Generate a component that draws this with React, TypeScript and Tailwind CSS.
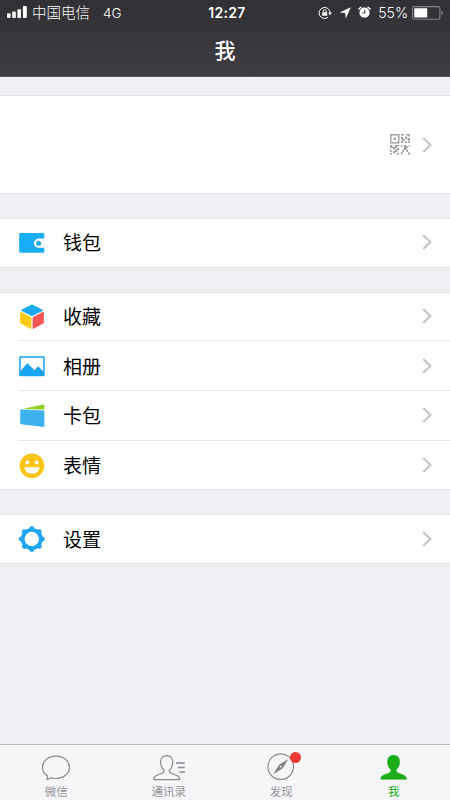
import React from 'react';

interface RowItem {
  name: string;
  icon: React.ReactNode;
}

interface TabItem {
  name: string;
  icon: React.ReactNode;
  active?: boolean;
  badge?: boolean;
}

const WalletIcon = () => (
  <svg width="28" height="28" viewBox="0 0 28 28">
    <path
      d="M2.5 4H25a1.3 1.3 0 0 1 1.3 1.3V9.6H20.6a4.6 4.6 0 0 0 0 9.2H26.3v3.7A1.3 1.3 0 0 1 25 23.8H2.5a1.3 1.3 0 0 1-1.3-1.3V5.3A1.3 1.3 0 0 1 2.5 4Z"
      fill="#18adf8"
    />
    <circle cx="20.6" cy="14.2" r="2.5" fill="#18adf8" />
  </svg>
);

const CubeIcon = () => (
  <svg width="28" height="28" viewBox="0 0 28 28" strokeLinejoin="round" strokeWidth=".8">
    <path d="M14 1.8 24.8 7.3 14 12.8 3.3 7.3Z" fill="#18a8f2" stroke="#18a8f2" />
    <path d="M2.6 9 13 14.5V25.6L2.6 20.1Z" fill="#fbca11" stroke="#fbca11" />
    <path d="M25.4 9 15 14.5V25.6l10.4-5.5Z" fill="#f85454" stroke="#f85454" />
  </svg>
);

const AlbumIcon = () => (
  <svg width="28" height="28" viewBox="0 0 28 28">
    <rect x="1.9" y="4.9" width="24" height="18.6" rx=".6" fill="#fff" stroke="#18a4f0" strokeWidth="1.5" />
    <path d="M2 19.5 8.8 11.8Q9.4 11.2 10 11.8L16.6 18.2 19.6 14.7Q20.2 14.1 20.8 14.8L25.9 20.2V23.5H2Z" fill="#18a4f0" />
  </svg>
);

const CardIcon = () => (
  <svg width="28" height="28" viewBox="0 0 28 28">
    <path d="M4.2 6.9 25.5 2.4a.8.8 0 0 1 .9.8V7.6Z" fill="#8fd322" />
    <path
      d="M3.3 7.5 25.4 8.6a1 1 0 0 1 1 1V23.9a1 1 0 0 1-1.1 1L3.1 22.2a1 1 0 0 1-.9-1V8.5a1 1 0 0 1 1.1-1Z"
      fill="#3cb1f0"
    />
  </svg>
);

const SmileIcon = () => (
  <svg width="28" height="28" viewBox="0 0 28 28">
    <circle cx="13.9" cy="13.8" r="12.3" fill="#fbc518" />
    <circle cx="9.3" cy="10.4" r="1.9" fill="#fff" />
    <circle cx="18.7" cy="10.4" r="1.9" fill="#fff" />
    <path d="M6.4 15.3H21.6Q20.8 21.7 14 21.7T6.4 15.3Z" fill="#fff" />
  </svg>
);

const GEAR_ANGLES = [0, 45, 90, 135, 180, 225, 270, 315];

const GearIcon = () => (
  <svg width="28" height="28" viewBox="0 0 28 28">
    <circle cx="13.8" cy="14" r="9.1" fill="none" stroke="#20a5f1" strokeWidth="3.8" />
    {GEAR_ANGLES.map((angle) => (
      <rect
        key={angle}
        x="11.6"
        y="1.2"
        width="4.4"
        height="4"
        rx="1.4"
        fill="#20a5f1"
        transform={`rotate(${angle} 13.8 14)`}
      />
    ))}
  </svg>
);

const QrIcon = () => (
  <svg width="20" height="21" viewBox="0 0 20 21" fill="#a0a0a0">
    <path d="M.8.8h8v8h-8Z" fill="none" stroke="#a0a0a0" strokeWidth="1.4" />
    <path d="M3.6 3.6h2.4v2.4H3.6z" />
    <path d="M11 0h3v1.5h-3zM16 0h4v2.5h-1.5V1.5H16zM11 3h2v2h2v1.5h-2V9h-2V7h1V5h-1zM15 2.5h2V5h-2zM17.5 4H20v2h-2.5zM14.5 7.5H17V9h-2.5zM18 6.5h2V9h-1.5V8H18z" />
    <path d="M0 11h2.5v2H5v-2h4v1.5H7V14H5v1.5H3V14H0zM0 15.5h1.5V18H0zM3 17h2v-1.5h2V14h2v2.5H7V18H5v1.5H3zM0 19h2v1.5H0zM6.5 19H9v1.5H6.5z" />
    <path d="M14 11h2.5v1.5H18V14h-1.5v1.5H18V18h-1.5v-2H14v2h-1.5v-2.5H14zM18.5 11H20v1.5h-1.5zM11 11h1.5v2H11zM11 18h1.5v2.5H11zM18 18.5h2v2h-2z" />
  </svg>
);

const Chevron = () => (
  <svg width="10" height="16" viewBox="0 0 10 16" fill="none" stroke="#c4c4c7" strokeWidth="2">
    <path d="M1.2 1 8.4 8 1.2 15" />
  </svg>
);

const ChatIcon = () => (
  <svg width="32" height="30" viewBox="0 0 32 30" fill="none" stroke="#8b8b8f" strokeWidth="1.2" strokeLinejoin="round">
    <path d="M7.6 24.1C4.4 22 2.4 18.9 2.4 15.3 2.4 8.9 8.4 4.1 16 4.1S29.4 8.9 29.4 15.3 23.6 26.5 16 26.5c-1.8 0-3.4-.3-5-.8L7 27.6Z" />
  </svg>
);

const PERSON_PATH =
  'M13.6 3.6C9.8 3.6 7.6 6.3 7.6 10c0 3.4 1.2 6 3.2 7.8.6 1.8-.2 2.8-1.6 3.4l-5.7 2.3C1.5 24.3.9 25.6.8 27.6H26.6C26.5 25.6 25.9 24.3 23.9 23.5L18.2 21.2C16.8 20.6 16 19.6 16.6 17.8 18.6 16 19.8 13.4 19.8 10 19.8 6.3 17.5 3.6 13.6 3.6Z';

const ContactsIcon = () => (
  <svg width="32" height="30" viewBox="0 0 32 30" fill="none" stroke="#8b8b8f" strokeWidth="1.2">
    <path d={PERSON_PATH} strokeLinejoin="round" />
    <path d="M23 11h8.8M25 15.5h6.8M26.5 20h5.3" strokeWidth="1.4" />
  </svg>
);

const CompassIcon = () => (
  <svg width="32" height="30" viewBox="0 0 32 30">
    <circle cx="15.7" cy="14.7" r="12.8" fill="none" stroke="#8b8b8f" strokeWidth="1.2" />
    <path d="M23.2 7.2 17.5 16.5 8.2 22.2 13.9 12.9Z" fill="#808084" />
    <circle cx="15.7" cy="14.7" r=".9" fill="#f7f7f8" />
  </svg>
);

const MeIcon = () => (
  <svg width="32" height="30" viewBox="0 0 32 30">
    <path d={PERSON_PATH} fill="#1aad19" stroke="#1aad19" strokeWidth=".5" transform="translate(1.9 -.3)" />
  </svg>
);

const RotationLockIcon = () => (
  <svg width="14" height="14" viewBox="0 0 14 14" fill="none" stroke="#fff">
    <path d="M10 11.3A5.5 5.5 0 1 1 12.1 6.6" strokeWidth="1" />
    <path d="M10.2 6.5h3.7L12 9.2Z" fill="#fff" stroke="none" />
    <path d="M5.2 6.4V5.3a1.5 1.5 0 0 1 3 0v1.1" strokeWidth="1" />
    <rect x="4.2" y="6.2" width="5" height="3.6" rx=".5" fill="#fff" stroke="none" />
  </svg>
);

const LocationIcon = () => (
  <svg width="12" height="12" viewBox="0 0 12 12" fill="#fff">
    <path d="M11.8.3 6.8 11.5 6.2 6.1.5 5.4Z" />
  </svg>
);

const AlarmIcon = () => (
  <svg width="13" height="13" viewBox="0 0 13 13">
    <circle cx="6.5" cy="6.7" r="5.1" fill="#fff" />
    <path d="M.9 3 2.9 1.2M12.1 3 10.1 1.2" stroke="#fff" strokeWidth="1.5" strokeLinecap="round" />
    <path d="M6.8 3.8V7H4.5" fill="none" stroke="#333338" strokeWidth="1" />
  </svg>
);

const BatteryIcon = () => (
  <svg width="32" height="14" viewBox="0 0 32 14">
    <rect x=".6" y=".6" width="27.3" height="12.6" rx="1.8" fill="none" stroke="#828287" strokeWidth="1.1" />
    <rect x="2.2" y="2.3" width="13" height="9.2" rx=".5" fill="#fff" />
    <path d="M29.3 4.8q1.6.6 1.6 2.1t-1.6 2.1Z" fill="#828287" />
  </svg>
);

const SignalIcon = () => (
  <svg width="21" height="13" viewBox="0 0 21 13" fill="#fff">
    <rect x="0" y="7.3" width="3.6" height="4.7" rx="1" />
    <rect x="5.2" y="5.5" width="3.6" height="6.5" rx="1" />
    <rect x="10.4" y="3.2" width="3.6" height="8.8" rx="1" />
    <rect x="15.9" y="0" width="3.9" height="12" rx="1" />
  </svg>
);

const sections: RowItem[][] = [
  [{ name: '钱包', icon: <WalletIcon /> }],
  [
    { name: '收藏', icon: <CubeIcon /> },
    { name: '相册', icon: <AlbumIcon /> },
    { name: '卡包', icon: <CardIcon /> },
    { name: '表情', icon: <SmileIcon /> },
  ],
  [{ name: '设置', icon: <GearIcon /> }],
];

const tabs: TabItem[] = [
  { name: '微信', icon: <ChatIcon /> },
  { name: '通讯录', icon: <ContactsIcon /> },
  { name: '发现', icon: <CompassIcon />, badge: true },
  { name: '我', icon: <MeIcon />, active: true },
];

const StatusBar = () => (
  <div className="grid h-6 grid-cols-[1fr_auto_1fr] items-center pl-[7px] pr-1.5 text-[14px] leading-6">
    <div className="flex items-center">
      <SignalIcon />
      <span className="ml-1 pt-px text-[14.5px] font-light">中国电信</span>
      <span className="ml-[13px] text-[13.5px] font-light">4G</span>
    </div>
    <span className="pl-[3px] text-[14px] font-semibold tracking-[0.3px]">12:27</span>
    <div className="flex items-center justify-end">
      <RotationLockIcon />
      <span className="ml-[7px]"><LocationIcon /></span>
      <span className="ml-[7px]"><AlarmIcon /></span>
      <span className="ml-[7px] mr-1 font-light">55%</span>
      <BatteryIcon />
    </div>
  </div>
);

const ListRow: React.FC<{ item: RowItem; last: boolean }> = ({ item, last }) => (
  <button className="flex h-[49.7px] w-full items-center pl-[18px] text-left">
    <span className="flex w-7 shrink-0">{item.icon}</span>
    <span
      className={`-ml-7 flex h-full flex-1 items-center justify-between border-b pl-[45px] pr-[18px] ${last ? 'border-transparent' : 'border-[#e5e5e7]'}`}
    >
      <span className="pt-1 text-[19px] leading-7 text-black">{item.name}</span>
      <Chevron />
    </span>
  </button>
);

export default function App() {
  return (
    <div className="flex h-[800px] w-[450px] flex-col overflow-hidden bg-[#efeff4] font-['Inter','Noto_Sans_CJK_SC',sans-serif]">
      <header className="h-[77px] shrink-0 border-b border-[#555459] bg-linear-to-b from-[#303035] to-[#3d3c41] text-white">
        <StatusBar />
        <h1 className="pt-[11px] text-center text-[21px] font-medium leading-8">我</h1>
      </header>

      <main className="flex flex-1 flex-col">
        <section className="mt-[18px] flex h-[99px] items-center justify-end gap-3 border-y border-[#e3e3e6] bg-white pr-[18px]">
          <QrIcon />
          <Chevron />
        </section>
        {sections.map((section) => (
          <section key={section[0].name} className="mt-6 border-y border-[#e3e3e6] bg-white">
            <div className="-my-px">
              {section.map((item, i) => (
                <ListRow key={item.name} item={item} last={i === section.length - 1} />
              ))}
            </div>
          </section>
        ))}
      </main>

      <nav className="grid h-14 shrink-0 grid-cols-4 border-t border-[#b9b9be] bg-[#f6f6f8]">
        {tabs.map((tab) => (
          <button key={tab.name} className="flex flex-col items-center pt-[7px]">
            <span className="relative">
              {tab.icon}
              {tab.badge && <span className="absolute left-[25px] top-0 size-[11px] rounded-full bg-[#f03b35]" />}
            </span>
            <span className={`mt-0.5 text-[11.5px] leading-4 ${tab.active ? 'text-[#1aad19]' : 'text-[#949498]'}`}>
              {tab.name}
            </span>
          </button>
        ))}
      </nav>
    </div>
  );
}
